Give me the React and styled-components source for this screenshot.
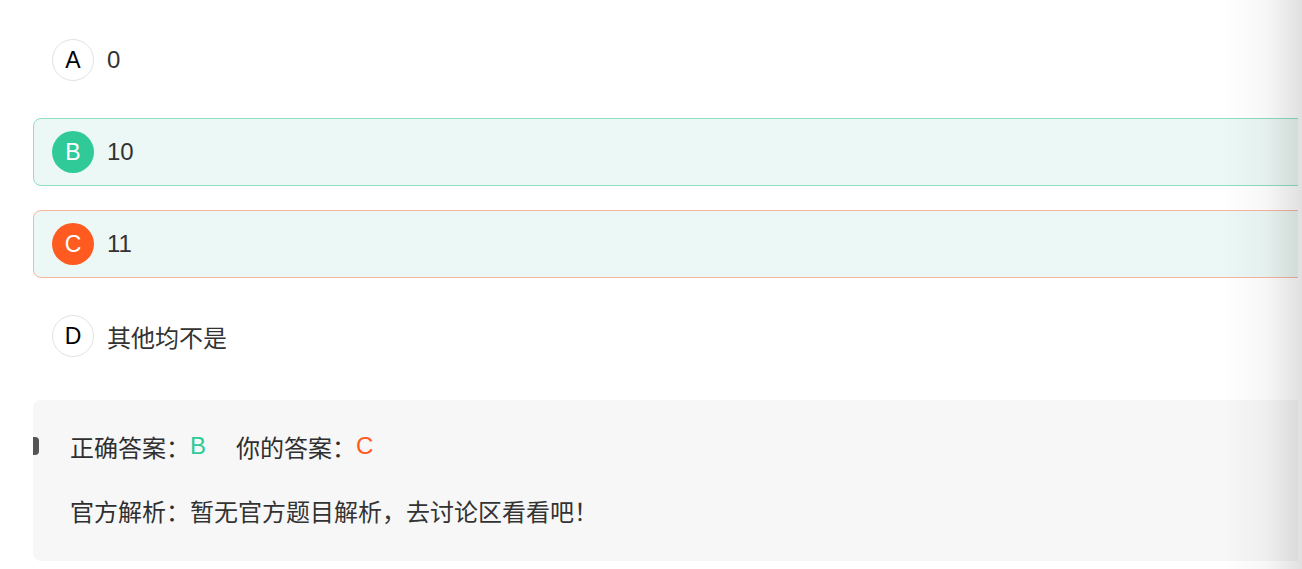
import React from 'react';
import styled, { createGlobalStyle } from 'styled-components';

const GlobalStyle = createGlobalStyle`
  html, body {
    margin: 0;
    padding: 0;
    background: #ffffff;
  }
  body {
    font-family: "Liberation Sans", "Noto Sans CJK SC", sans-serif;
    color: #333333;
  }
`;

const Frame = styled.div`
  margin-right: 4px;
  overflow: hidden;
`;

const Page = styled.div`
  padding: 26px 0 7px 33px;
  margin-right: -20px;
  display: flex;
  flex-direction: column;
`;

const Options = styled.div`
  display: flex;
  flex-direction: column;
  gap: 24px;
`;

const borderColors = {
  right: '#8edfc2',
  wrong: '#f7b6a0',
  none: 'transparent',
};

const Option = styled.div`
  box-sizing: border-box;
  height: 68px;
  display: flex;
  align-items: center;
  gap: 13px;
  padding-left: 18px;
  border-radius: 8px;
  border: 1px solid ${p => borderColors[p.$state]};
  background: ${p => (p.$state === 'none' ? 'transparent' : '#ecf8f5')};
`;

const circleColors = {
  right: '#2fca97',
  wrong: '#ff5a1f',
};

const Letter = styled.span`
  box-sizing: border-box;
  width: 42px;
  height: 42px;
  border-radius: 50%;
  display: flex;
  align-items: center;
  justify-content: center;
  font-size: 23px;
  background: ${p => circleColors[p.$state] || '#ffffff'};
  color: ${p => (circleColors[p.$state] ? '#ffffff' : '#000000')};
  border: 1px solid ${p => (circleColors[p.$state] ? 'transparent' : '#e2e2e2')};
`;

const OptionText = styled.span`
  font-size: 24px;
  color: #333333;
`;

const Analysis = styled.div`
  margin-top: 30px;
  height: 161px;
  box-sizing: border-box;
  background: #f7f7f7;
  border-radius: 8px;
  padding: 28px 37px 0;
  display: flex;
  flex-direction: column;
  gap: 28px;
`;

const Line = styled.div`
  position: relative;
  height: 36px;
  display: flex;
  align-items: center;
  font-size: 24px;
  color: #333333;
  ${p =>
    p.$marked &&
    `
    &::before {
      content: '';
      position: absolute;
      left: -37px;
      top: 9px;
      width: 6px;
      height: 18px;
      border-radius: 0 4px 4px 0;
      background: #555555;
    }
  `}
`;

const Label = styled.span`
  font-weight: 400;
  color: #2f2f2f;
`;

const Answer = styled.span`
  color: ${p => (p.$right ? '#2fca97' : '#ff5a1f')};
  margin-right: ${p => (p.$right ? '30px' : '0')};
`;

const EdgeShade = styled.div`
  position: fixed;
  top: 0;
  right: 0;
  bottom: 0;
  width: 80px;
  pointer-events: none;
  background: linear-gradient(
    to right,
    rgba(0, 0, 0, 0) 0%,
    rgba(0, 0, 0, 0.03) 55%,
    rgba(0, 0, 0, 0.12) 100%
  );
`;

const options = [
  { key: 'A', text: '0', state: 'none' },
  { key: 'B', text: '10', state: 'right' },
  { key: 'C', text: '11', state: 'wrong' },
  { key: 'D', text: '其他均不是', state: 'none' },
];

export default function App() {
  return (
    <>
      <GlobalStyle />
      <Frame>
        <Page>
          <Options>
            {options.map(o => (
              <Option key={o.key} $state={o.state}>
                <Letter $state={o.state}>{o.key}</Letter>
                <OptionText>{o.text}</OptionText>
              </Option>
            ))}
          </Options>
          <Analysis>
            <Line $marked>
              <Label>正确答案：</Label>
              <Answer $right>B</Answer>
              <Label>你的答案：</Label>
              <Answer>C</Answer>
            </Line>
            <Line>
              <Label>官方解析：</Label>
              <span>暂无官方题目解析，去讨论区看看吧！</span>
            </Line>
          </Analysis>
        </Page>
      </Frame>
      <EdgeShade />
    </>
  );
}
